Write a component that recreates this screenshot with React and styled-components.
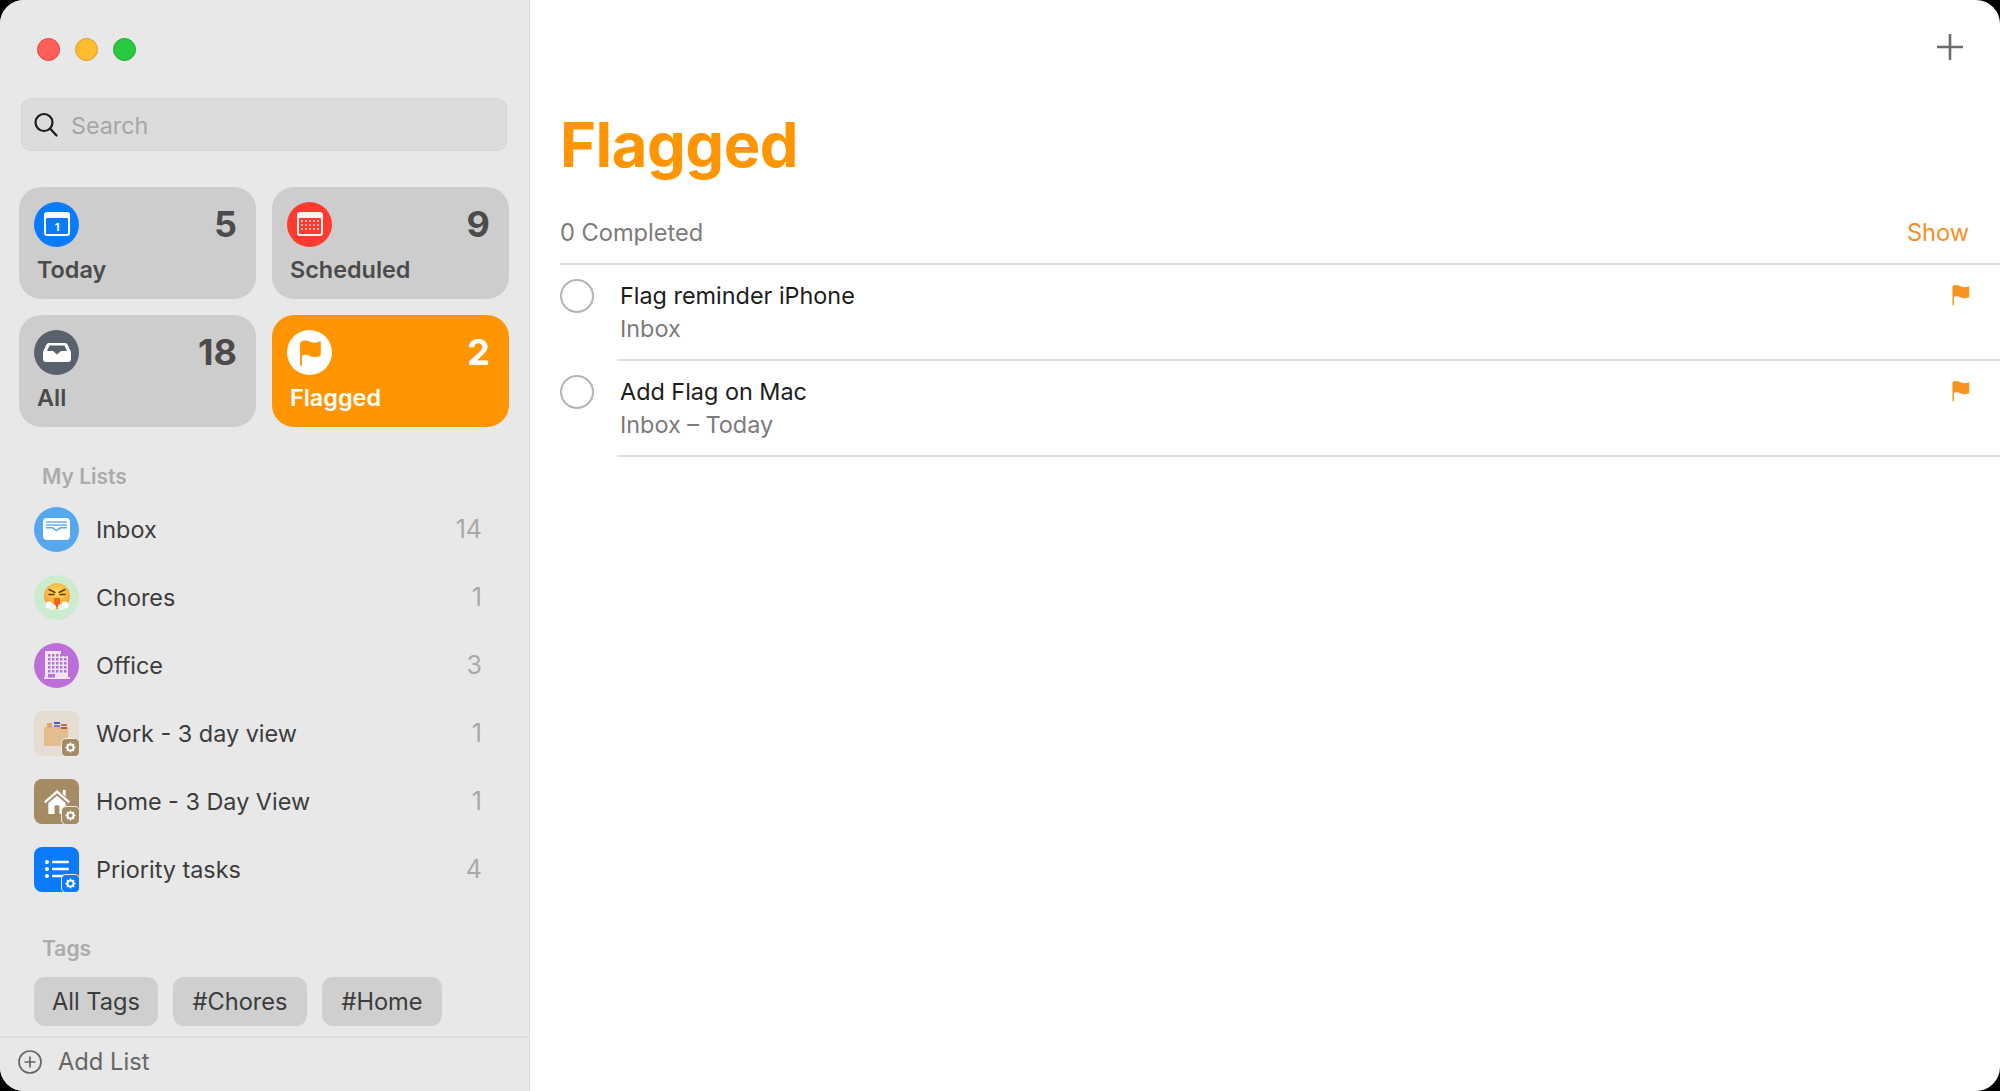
import React from "react";
import styled, { createGlobalStyle } from "styled-components";

const GlobalStyle = createGlobalStyle`
  html, body {
    margin: 0;
    padding: 0;
    background: #000;
  }
  body {
    font-family: Inter, "Liberation Sans", sans-serif;
  }
`;

const Window = styled.div`
  width: 2000px;
  height: 1091px;
  display: flex;
  overflow: hidden;
  border-radius: 24px;
  background: #fff;
`;

const Sidebar = styled.aside`
  width: 530px;
  flex: none;
  box-sizing: border-box;
  display: flex;
  flex-direction: column;
  background: #e8e8e8;
  border-right: 1px solid #dcdcdc;
`;

const TrafficLights = styled.div`
  display: flex;
  gap: 15px;
  padding: 38px 0 0 37px;
`;

const Light = styled.span`
  width: 23px;
  height: 23px;
  box-sizing: border-box;
  border-radius: 50%;
  background: ${(p) => p.$color};
  border: 1px solid ${(p) => p.$edge};
`;

const SearchBox = styled.div`
  margin: 37px 0 0 21px;
  width: 486px;
  height: 53px;
  box-sizing: border-box;
  display: flex;
  align-items: center;
  gap: 13px;
  padding: 1px 0 0 12px;
  background: #dcdcdc;
  border: 1px solid #d5d5d5;
  border-radius: 10px;
  color: #a6a6a6;
  font-size: 23.3px;
`;

const CardGrid = styled.div`
  margin: 36px 0 0 19px;
  width: 490px;
  display: grid;
  grid-template-columns: 237px 237px;
  grid-auto-rows: 112px;
  gap: 16px;
`;

const Card = styled.div`
  box-sizing: border-box;
  padding: 14px 19px 0 15px;
  display: flex;
  flex-direction: column;
  border-radius: 22px;
  background: ${(p) => (p.$active ? "#ff9500" : "#cdcdcd")};
  color: ${(p) => (p.$active ? "#fff" : "#4b4b4b")};
`;

const CardTop = styled.div`
  display: flex;
  justify-content: space-between;
  align-items: center;
  height: 46px;
`;

const CardCount = styled.span`
  font-size: 36px;
  font-weight: 700;
`;

const CardLabel = styled.span`
  margin: 8px 0 0 3px;
  font-size: 23.4px;
  font-weight: 600;
  line-height: 30px;
`;

const IconCircle = styled.span`
  width: 45px;
  height: 45px;
  flex: none;
  display: flex;
  align-items: center;
  justify-content: center;
  border-radius: 50%;
  background: ${(p) => p.$bg};
`;

const SectionLabel = styled.div`
  margin: ${(p) => p.$top}px 0 0 42px;
  font-size: 21px;
  font-weight: 600;
  line-height: 26px;
  color: #ababab;
`;

const Lists = styled.div`
  margin-top: 5px;
  display: flex;
  flex-direction: column;
`;

const ListRow = styled.div`
  height: 68px;
  display: flex;
  align-items: center;
  padding: 0 47px 0 34px;
  color: #3c3c3c;
  font-size: 23.4px;
`;

const ListName = styled.span`
  flex: 1;
  margin-left: 17px;
`;

const ListCount = styled.span`
  color: #a9a9a9;
  font-size: 25px;
`;

const SquareIcon = styled.span`
  position: relative;
  width: 45px;
  height: 45px;
  flex: none;
  display: flex;
  align-items: center;
  justify-content: center;
  border-radius: 8px;
  background: ${(p) => p.$bg};
`;

const GearBadge = styled.span`
  position: absolute;
  right: -1px;
  bottom: -1px;
  width: 17px;
  height: 17px;
  display: flex;
  align-items: center;
  justify-content: center;
  border-radius: 5px;
  background: ${(p) => p.$bg};
  border: 1px solid ${(p) => p.$edge};
`;

const TagRow = styled.div`
  margin: 15px 0 0 34px;
  display: flex;
  gap: 15px;
`;

const TagChip = styled.span`
  height: 49px;
  width: ${(p) => p.$width}px;
  box-sizing: border-box;
  display: flex;
  align-items: center;
  justify-content: center;
  border-radius: 11px;
  background: #cfcfcf;
  color: #3c3c3c;
  font-size: 23.6px;
`;

const Footer = styled.div`
  margin-top: auto;
  height: 55px;
  box-sizing: border-box;
  display: flex;
  align-items: center;
  gap: 16px;
  padding: 0 0 6px 18px;
  border-top: 2px solid #dedede;
  color: #666;
  font-size: 23.7px;
`;

const Main = styled.main`
  flex: 1;
  min-width: 0;
  display: flex;
  flex-direction: column;
`;

const MainTop = styled.div`
  height: 94px;
  display: flex;
  justify-content: flex-end;
  align-items: flex-start;
  padding: 34px 37px 0 0;
  box-sizing: border-box;
`;

const Title = styled.h1`
  margin: 16px 0 0 30px;
  font-size: 61.5px;
  font-weight: 700;
  line-height: 70px;
  color: #ff9500;
  letter-spacing: -0.5px;
`;

const CompletedRow = styled.div`
  margin: 23px 0 0 30px;
  height: 62px;
  box-sizing: border-box;
  display: flex;
  justify-content: space-between;
  align-items: center;
  padding: 0 31px 2px 0;
  border-bottom: 2px solid #dedede;
  font-size: 23.6px;
  color: #7b7b7b;
`;

const ShowLink = styled.span`
  color: #f2902a;
`;

const Reminder = styled.div`
  display: flex;
  margin-left: 30px;
  height: 96px;
  align-items: flex-start;
`;

const CheckCircle = styled.span`
  width: 34px;
  height: 34px;
  flex: none;
  box-sizing: border-box;
  margin-top: 14px;
  border-radius: 50%;
  border: 2px solid #b5b5b5;
`;

const ReminderBody = styled.div`
  flex: 1;
  height: 96px;
  box-sizing: border-box;
  margin-left: 23px;
  padding: 15px 30px 0 3px;
  display: flex;
  justify-content: space-between;
  align-items: flex-start;
  border-bottom: 2px solid #dedede;
`;

const ReminderTitle = styled.div`
  font-size: 23.4px;
  line-height: 32px;
  color: #1c1c1c;
`;

const ReminderSub = styled.div`
  font-size: 23.4px;
  line-height: 32px;
  margin-top: 1px;
  color: #7b7b7b;
`;

const FlagMark = styled.svg`
  width: 19px;
  height: 22px;
  margin-top: 4px;
`;

const lights = [
  ["#ff5f57", "#e0443e"],
  ["#febc2e", "#d9a128"],
  ["#28c840", "#1fa832"],
];

const SearchIcon = () => (
  <svg width="24" height="26" viewBox="0 0 24 26" fill="none" stroke="#1a1a1a" strokeWidth="2.2" strokeLinecap="round">
    <circle cx="10" cy="10.5" r="8.5" />
    <path d="M16.5 17l6 6.5" />
  </svg>
);

const TodayIcon = () => (
  <svg width="26" height="26" viewBox="0 0 26 26">
    <rect x="0" y="1" width="26" height="24" rx="3" fill="#fff" />
    <rect x="2" y="7" width="22" height="16" rx="1" fill="#0a7aff" />
    <text x="13" y="20" textAnchor="middle" fontSize="11" fontWeight="700" fontFamily="Inter, sans-serif" fill="#fff">1</text>
  </svg>
);

const ScheduledIcon = () => (
  <svg width="26" height="26" viewBox="0 0 26 26">
    <rect x="0" y="1" width="26" height="24" rx="3" fill="#fff" opacity="0.92" />
    <rect x="2" y="7" width="22" height="16" rx="1" fill="#ff3b30" />
    {[9, 13, 17].map((y) =>
      [5, 9, 13, 17, 21].map((x) => <circle key={`${x}-${y}`} cx={x} cy={y + 1} r="1" fill="#fff" opacity="0.8" />)
    )}
  </svg>
);

const TrayIcon = () => (
  <svg width="28" height="19" viewBox="0 0 28 19">
    <path d="M6 0h16a3 3 0 0 1 2.700 1.800L28 9v7a3 3 0 0 1-3 3H3a3 3 0 0 1-3-3V9l3.300-7.200A3 3 0 0 1 6 0z" fill="#fff" />
    <path d="M6.500 2.500h15l2.500 5.500h-6l-4 3.500-4-3.500h-6z" fill="#59616c" />
  </svg>
);

const FlagIcon = ({ color }) => (
  <svg width="22" height="27" viewBox="0 0 24 30">
    <path d="M1 3.5C5 .5 9 1.5 12 3s7 2 11-.5c.5-.3 1 0 1 .6v14.300c0 .5-.2.8-.6 1.100-4 2.400-8 1.800-11.400.3-3-1.400-6.300-2-9-.3v10.500a1 1 0 0 1-2 0V5c0-.6.2-1.100 1-1.500z" fill={color} />
  </svg>
);

const InboxIcon = () => (
  <svg width="27" height="22" viewBox="0 0 27 22">
    <rect x="0" y="0" width="27" height="22" rx="4" fill="#fff" />
    <path d="M3 3h21v2H3zM3 6h21v2H3z" fill="#8cc4f3" />
    <path d="M3 9h7l3.500 3 3.500-3h7v1.500h-6l-4.500 3-4.500-3H3z" fill="#5aa9ec" />
  </svg>
);

const FaceIcon = () => (
  <svg width="28" height="28" viewBox="0 0 28 28">
    <defs>
      <radialGradient id="faceFill" cx="50%" cy="35%" r="65%">
        <stop offset="0%" stopColor="#ffdf5e" />
        <stop offset="100%" stopColor="#f59a2e" />
      </radialGradient>
    </defs>
    <circle cx="14" cy="13" r="13" fill="url(#faceFill)" />
    <path d="M6 6.500l6 3M22 6.500l-6 3" stroke="#5e3a14" strokeWidth="1.400" strokeLinecap="round" />
    <path d="M6 11.500h5M17 11.500h5" stroke="#5e3a14" strokeWidth="1.500" strokeLinecap="round" />
    <path d="M11 15h6v9h-6z" fill="#e8661c" />
    <circle cx="6" cy="22" r="3.500" fill="#fff" />
    <circle cx="10" cy="24" r="3" fill="#f4f4f4" />
    <circle cx="22" cy="22" r="3.500" fill="#fff" />
    <circle cx="18" cy="24" r="3" fill="#f4f4f4" />
  </svg>
);

const BuildingIcon = () => (
  <svg width="26" height="28" viewBox="0 0 26 28">
    <path d="M1 0h16v5h7v21h2v2H0v-2h1z" fill="#f3e4f8" />
    {[3, 7, 11, 15, 19].map((y) =>
      [4, 8, 12, 16, 20].map((x) => <rect key={`${x}-${y}`} x={x} y={y} width="2.500" height="2.500" fill="#b86fd6" />)
    )}
    <rect x="4" y="23" width="7" height="3.500" fill="#b86fd6" />
  </svg>
);

const BoxIcon = () => (
  <svg width="26" height="25" viewBox="0 0 26 25">
    <rect x="0" y="6" width="24" height="19" rx="1" fill="#e3bd8d" />
    <rect x="3" y="2" width="5" height="5" rx="1" fill="#e0a76a" />
    <rect x="10" y="1" width="6" height="2" fill="#4b5fa8" />
    <rect x="10" y="4" width="6" height="2" fill="#7a76b8" />
    <rect x="17" y="3" width="6" height="2" fill="#c96a52" />
    <rect x="17" y="6" width="6" height="2" fill="#c4533e" />
  </svg>
);

const HouseIcon = () => (
  <svg width="28" height="25" viewBox="0 0 28 26">
    <path d="M20 1h3v7l-3-3z" fill="#fff" />
    <path d="M14 1L.500 13l1.500 1.700L14 4.500l12 10.200 1.500-1.700z" fill="#fff" />
    <path d="M5 14.500L14 7l9 7.500V26H5z" fill="#fff" />
    <rect x="11.500" y="17" width="5" height="9" fill="#a58b63" />
  </svg>
);

const ListIcon = () => (
  <svg width="24" height="18" viewBox="0 0 24 18" fill="#fff">
    <circle cx="2" cy="2" r="2" />
    <circle cx="2" cy="9" r="2" />
    <circle cx="2" cy="16" r="2" />
    <rect x="7" y="0.800" width="17" height="2.400" rx="1" />
    <rect x="7" y="7.800" width="17" height="2.400" rx="1" />
    <rect x="7" y="14.800" width="17" height="2.400" rx="1" />
  </svg>
);

const GearIcon = () => (
  <svg width="11" height="11" viewBox="0 0 12 12">
    <circle cx="6" cy="6" r="3.300" fill="none" stroke="#fff" strokeWidth="2.200" />
    <path d="M6 .5v2M6 9.500v2M.5 6h2M9.500 6h2M2.100 2.100l1.400 1.400M8.500 8.500l1.400 1.400M2.100 9.900l1.400-1.400M8.500 3.500l1.400-1.400" stroke="#fff" strokeWidth="1.400" />
  </svg>
);

const AddListIcon = () => (
  <svg width="24" height="24" viewBox="0 0 24 24" fill="none" stroke="#666" strokeWidth="1.700">
    <circle cx="12" cy="12" r="11" />
    <path d="M12 6.500v11M6.500 12h11" />
  </svg>
);

const PlusIcon = () => (
  <svg width="26" height="26" viewBox="0 0 26 26" stroke="#6b6b6b" strokeWidth="2.600">
    <path d="M13 0v26M0 13h26" />
  </svg>
);

const cards = [
  { label: "Today", count: 5, bg: "#0a7aff", icon: <TodayIcon /> },
  { label: "Scheduled", count: 9, bg: "#ff3b30", icon: <ScheduledIcon /> },
  { label: "All", count: 18, bg: "#59616c", icon: <TrayIcon /> },
  { label: "Flagged", count: 2, bg: "#fff", active: true, icon: <FlagIcon color="#ff9500" /> },
];

const listRows = [
  { name: "Inbox", count: 14, circle: "#55a8ee", icon: <InboxIcon /> },
  { name: "Chores", count: 1, circle: "#cdeccf", icon: <FaceIcon /> },
  { name: "Office", count: 3, circle: "#bc6fd8", icon: <BuildingIcon /> },
  { name: "Work - 3 day view", count: 1, square: "#e6ddd2", badge: "#a58b63", icon: <BoxIcon /> },
  { name: "Home - 3 Day View", count: 1, square: "#a58b63", badge: "#a58b63", icon: <HouseIcon /> },
  { name: "Priority tasks", count: 4, square: "#0a7aff", badge: "#0a7aff", icon: <ListIcon /> },
];

const tags = [
  { name: "All Tags", width: 124 },
  { name: "#Chores", width: 134 },
  { name: "#Home", width: 120 },
];

const reminders = [
  { title: "Flag reminder iPhone", sub: "Inbox" },
  { title: "Add Flag on Mac", sub: "Inbox – Today" },
];

export default function App() {
  return (
    <>
      <GlobalStyle />
      <Window>
        <Sidebar>
          <TrafficLights>
            {lights.map(([color, edge]) => (
              <Light key={color} $color={color} $edge={edge} />
            ))}
          </TrafficLights>
          <SearchBox>
            <SearchIcon />
            Search
          </SearchBox>
          <CardGrid>
            {cards.map((c) => (
              <Card key={c.label} $active={c.active}>
                <CardTop>
                  <IconCircle $bg={c.bg}>{c.icon}</IconCircle>
                  <CardCount>{c.count}</CardCount>
                </CardTop>
                <CardLabel>{c.label}</CardLabel>
              </Card>
            ))}
          </CardGrid>
          <SectionLabel $top={37}>My Lists</SectionLabel>
          <Lists>
            {listRows.map((r) => (
              <ListRow key={r.name}>
                {r.square ? (
                  <SquareIcon $bg={r.square}>
                    {r.icon}
                    <GearBadge $bg={r.badge} $edge="#f1ece5">
                      <GearIcon />
                    </GearBadge>
                  </SquareIcon>
                ) : (
                  <IconCircle $bg={r.circle}>{r.icon}</IconCircle>
                )}
                <ListName>{r.name}</ListName>
                <ListCount>{r.count}</ListCount>
              </ListRow>
            ))}
          </Lists>
          <SectionLabel $top={33}>Tags</SectionLabel>
          <TagRow>
            {tags.map((t) => (
              <TagChip key={t.name} $width={t.width}>
                {t.name}
              </TagChip>
            ))}
          </TagRow>
          <Footer>
            <AddListIcon />
            Add List
          </Footer>
        </Sidebar>
        <Main>
          <MainTop>
            <PlusIcon />
          </MainTop>
          <Title>Flagged</Title>
          <CompletedRow>
            <span>0 Completed</span>
            <ShowLink>Show</ShowLink>
          </CompletedRow>
          {reminders.map((r) => (
            <Reminder key={r.title}>
              <CheckCircle />
              <ReminderBody>
                <div>
                  <ReminderTitle>{r.title}</ReminderTitle>
                  <ReminderSub>{r.sub}</ReminderSub>
                </div>
                <FlagMark viewBox="0 0 24 30">
                  <path d="M1 2.500C5 .5 9 1.500 12 3s7 2 12 0v15c-5 2-9 1.500-12 0s-6-2-9-.5V29H1z" fill="#f7931e" />
                </FlagMark>
              </ReminderBody>
            </Reminder>
          ))}
        </Main>
      </Window>
    </>
  );
}
